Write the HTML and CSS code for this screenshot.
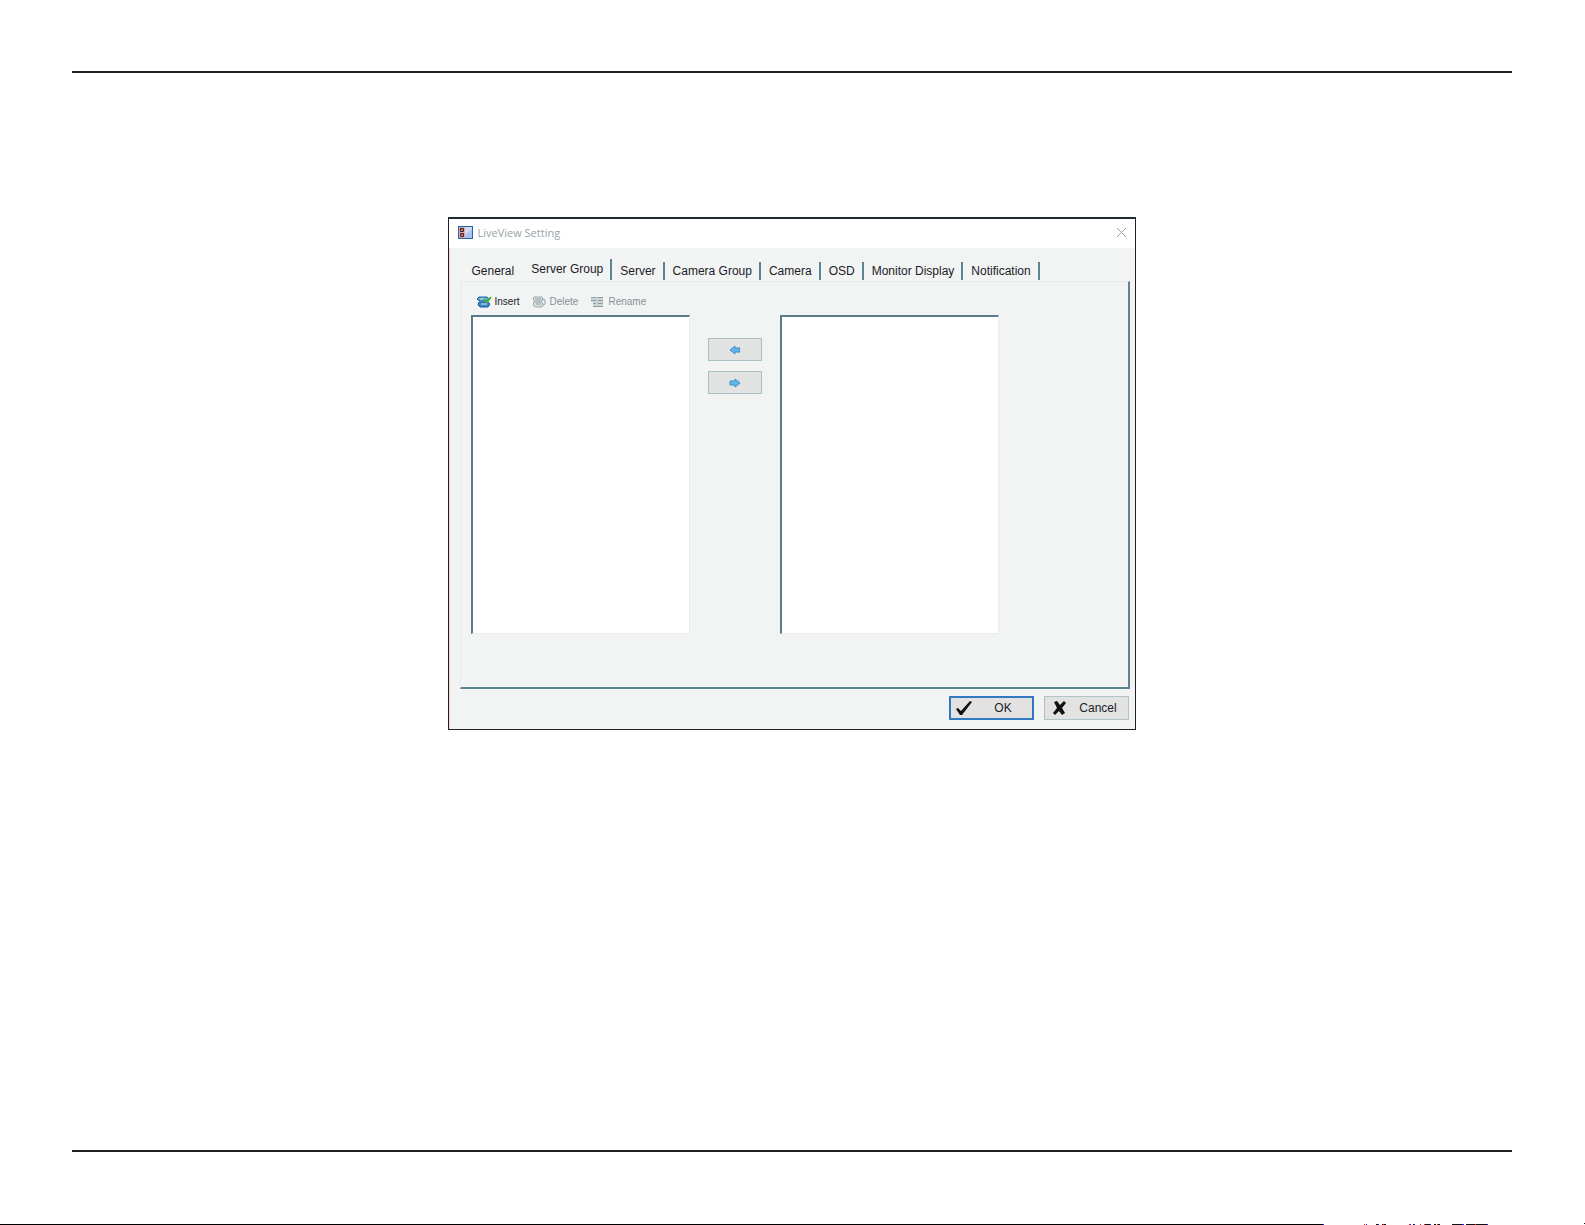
FILE: index.html
```html
<!DOCTYPE html>
<html lang="en">
<head>
    <meta charset="UTF-8">
    <meta name="viewport" content="width=device-width, initial-scale=1.0">
    <title>LiveView Setting</title>
    <link rel="stylesheet" href="styles.css">
</head>
<body>
    <hr class="page-rule">
    <main class="page-content">
        <section class="dialog" role="dialog" aria-labelledby="dialog-title">
            <header class="title-bar">
                <svg class="app-icon" viewBox="0 0 15 13" aria-hidden="true">
                    <rect x="0.5" y="0.5" width="14" height="12" fill="#cfdcf3" stroke="#2464a8"/>
                    <path d="M7 9L14 3V12H7z" fill="#a9c3ec"/>
                    <rect x="1" y="1" width="6" height="11" fill="#e4aaa2"/>
                    <path d="M2.500 2.500h3v3h-3zM2.500 7.500h3v3h-3z" fill="#e66a55" stroke="#3c2730"/>
                </svg>
                <h1 id="dialog-title">LiveView Setting</h1>
                <button class="close" type="button" aria-label="Close">
                    <svg viewBox="0 0 11 11" aria-hidden="true"><path d="M1 1L10 10M10 1L1 10" stroke="#8fa6b0" fill="none"/></svg>
                </button>
            </header>

            <div class="dialog-body">
                <div class="tabs" role="tablist">
                    <button class="tab first" type="button" role="tab">General</button>
                    <button class="tab active" type="button" role="tab" aria-selected="true">Server Group</button>
                    <button class="tab" type="button" role="tab">Server</button>
                    <button class="tab" type="button" role="tab">Camera Group</button>
                    <button class="tab" type="button" role="tab">Camera</button>
                    <button class="tab" type="button" role="tab">OSD</button>
                    <button class="tab" type="button" role="tab">Monitor Display</button>
                    <button class="tab" type="button" role="tab">Notification</button>
                </div>

                <div class="panel" role="tabpanel">
                    <div class="toolbar">
                        <button class="tool" type="button">
                            <svg viewBox="0 0 15 12" aria-hidden="true">
                                <path d="M2 1h8l2 2-2 2H2L0 3z" fill="#5b9fce" stroke="#1d67ac"/>
                                <path d="M2 6h9l2 2-2 3H3L1 9z" fill="#3d86c5" stroke="#1b5da5"/>
                                <path d="M3 3h6M4 8h6" stroke="#d4e8ee"/>
                                <path d="M7 3l3 3 4-5" fill="none" stroke="#41b538" stroke-width="2"/>
                            </svg>
                            Insert
                        </button>
                        <button class="tool" type="button" disabled>
                            <svg viewBox="0 0 15 12" aria-hidden="true">
                                <path d="M2 1h8l1 2-1 2H2L1 3zM2 6h8l1 2-1 3H3L1 9z" fill="#dadfe0" stroke="#9babb0"/>
                                <path d="M3 3h6M4 8h5M10 3l3 1v4l-3 2" fill="none" stroke="#8fa1a8"/>
                            </svg>
                            Delete
                        </button>
                        <button class="tool" type="button" disabled>
                            <svg viewBox="0 0 15 12" aria-hidden="true">
                                <path d="M1 1h12v10H3V6H1z" fill="#cbd3d5"/>
                                <path d="M1 1.500h5M1 4.500h5M3 7.500h3M3 10.500h10M7 1.500h6M8 4.500h5M8 7.500h5" fill="none" stroke="#8fa0a6"/>
                            </svg>
                            Rename
                        </button>
                    </div>
                    <div class="lists">
                        <select class="list" multiple aria-label="Server groups"></select>
                        <div class="move-buttons">
                            <button type="button" aria-label="Add to group">
                                <svg viewBox="0 0 12 10" aria-hidden="true"><path d="M1 5L6 1V3H11L10 5L11 7H6V9z" fill="#62b6ed" stroke="#3d8fc5"/></svg>
                            </button>
                            <button type="button" aria-label="Remove from group">
                                <svg viewBox="0 0 12 10" aria-hidden="true"><path d="M11 5L6 1V3H1V7H6V9z" fill="#62b6ed" stroke="#3d8fc5"/></svg>
                            </button>
                        </div>
                        <select class="list" multiple aria-label="Servers"></select>
                    </div>
                </div>

                <div class="actions">
                    <button class="action ok" type="button">
                        <svg viewBox="0 0 18 16" aria-hidden="true"><path d="M1 9L3 8L6 11L15 1L17 2L7 15H5z" fill="#111"/></svg>
                        <span>OK</span>
                    </button>
                    <button class="action" type="button">
                        <svg viewBox="0 0 18 16" aria-hidden="true"><path d="M4 2L7 1L10 5L14 1L16 3L12 8L15 13L12 15L9 11L5 15L3 13L7 8z" fill="#111"/></svg>
                        <span>Cancel</span>
                    </button>
                </div>
            </div>
        </section>
    </main>
    <hr class="page-rule">
    <footer class="page-edge">
        <div class="edge-line"></div>
        <svg class="edge-marks" viewBox="0 0 262 2" shape-rendering="crispEdges" aria-hidden="true">
            <path d="M53 1h2v1h-2zM59 1h4v1h-4zM90 1h2v1h-2zM102 1h6v1h-6zM111 1h2v1h-2zM115 1h2v1h-2zM129 1h12v1h-12zM143 1h22v1h-22zM261 0h1v1h-1z" fill="#111"/>
            <path d="M41 1h1v1h-1zM60 1h1v1h-1zM86 1h1v1h-1zM97 1h1v1h-1zM101 1h1v1h-1zM114 1h1v1h-1zM152 1h1v1h-1z" fill="#e22"/>
            <path d="M0 1h1v1h-1zM43 1h1v1h-1zM55 1h1v1h-1zM87 1h1v1h-1zM91 1h1v1h-1zM107 1h1v1h-1zM139 1h2v1h-2zM164 1h1v1h-1z" fill="#22e"/>
        </svg>
    </footer>
</body>
</html>
```
FILE: styles.css
```css
* {
    box-sizing: border-box;
}
body {
    margin: 0;
    min-height: 100vh;
    display: flex;
    flex-direction: column;
    background-color: #fff;
    color: #1b2028;
    font-family: "Liberation Sans", Arial, sans-serif;
    font-size: 12px;
}
button {
    font: inherit;
    color: inherit;
    padding: 0;
    border: none;
    background: none;
}
svg {
    display: block;
    flex-shrink: 0;
}
.page-rule {
    width: auto;
    height: 2px;
    margin: 71px 73px 0 72px;
    border: none;
    background-color: #231f20;
}
.page-content {
    flex: 1;
    padding: 144px 22px 0 20px;
}
.page-content + .page-rule {
    margin-top: 0;
}
.page-edge {
    display: flex;
    align-items: flex-end;
    padding-top: 71px;
}
.edge-line {
    flex: 1;
    height: 1px;
    background-color: #000;
}
.edge-marks {
    width: 262px;
    height: 2px;
}

/* Dialog window */
.dialog {
    max-width: 688px;
    margin: 0 auto;
    border: 1px solid #231f20;
    border-top: 2px solid #1e292e;
    background-color: #f2f3f3;
}
.title-bar {
    display: flex;
    align-items: center;
    gap: 5px;
    height: 29px;
    padding: 0 8px 2px 9px;
    background-color: #fff;
}
.app-icon {
    width: 15px;
    height: 13px;
}
.title-bar h1 {
    flex: 1;
    margin: 0;
    font-family: "Open Sans", sans-serif;
    font-size: 11px;
    font-weight: normal;
    color: #98a4a9;
}
.close svg {
    width: 11px;
    height: 11px;
}
.dialog-body {
    padding: 11px 5px 9px 10px;
    border-left: 1px solid #f3d9d2;
}

/* Tabs */
.tabs {
    display: flex;
    align-items: flex-end;
    height: 22px;
    padding-bottom: 1px;
}
.tab {
    height: 18px;
    padding: 0 7px 0 8px;
    border-right: 2px solid #5d8492;
    white-space: nowrap;
}
.tab.first {
    padding-left: 12px;
    border-right-color: transparent;
}
.tab.active {
    height: 21px;
    padding-bottom: 2px;
}

/* Server group page */
.panel {
    padding: 10px 20px 53px 10px;
    border: 1px solid #e8e9e9;
    border-right: 2px solid #5d8492;
    border-bottom: 2px solid #5d8492;
}
.toolbar {
    display: flex;
    gap: 12px;
    height: 23px;
    padding: 0 6px 4px;
    font-size: 10px;
}
.tool {
    display: flex;
    align-items: center;
    gap: 3px;
}
.tool:disabled {
    color: #849298;
}
.tool svg {
    width: 15px;
    height: 12px;
}
.lists {
    display: flex;
    gap: 18px;
}
.list {
    flex: 0 1 219px;
    min-width: 0;
    height: 319px;
    padding: 0;
    border: 1px solid #ebeded;
    border-top: 2px solid #5b7d89;
    border-left: 2px solid #5b7d89;
    border-radius: 0;
    background-color: #fff;
}
.move-buttons {
    display: flex;
    flex-direction: column;
    gap: 10px;
    padding-top: 23px;
}
.move-buttons button {
    display: flex;
    align-items: center;
    justify-content: center;
    width: 54px;
    height: 23px;
    border: 1px solid #a8bfc6;
    background-color: #e1e2e2;
}
.move-buttons svg {
    width: 12px;
    height: 10px;
}

/* OK and Cancel */
.actions {
    display: flex;
    justify-content: flex-end;
    gap: 10px;
    padding: 7px 1px 0 0;
}
.action {
    display: flex;
    align-items: center;
    width: 85px;
    height: 24px;
    padding: 0 5px;
    border: 1px solid #b1c3c8;
    background-color: #e3e2e3;
}
.action.ok {
    padding: 0 4px;
    border: 2px solid #3379c2;
}
.action span {
    flex: 1;
    padding-left: 6px;
}
.action svg {
    width: 18px;
    height: 16px;
}
```
